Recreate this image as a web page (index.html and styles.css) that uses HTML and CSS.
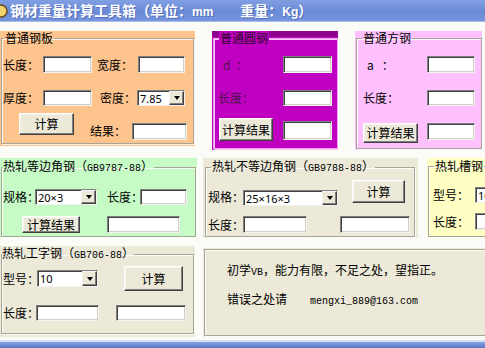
FILE: index.html
```html
<!DOCTYPE html>
<html lang="zh-CN">
<head>
    <meta charset="UTF-8">
    <title>钢材重量计算工具箱</title>
    <link rel="stylesheet" href="styles.css">
</head>
<body>
    <div class="titlebar">
        <svg class="app-icon" width="8" height="16" viewBox="0 0 8 16">
            <circle cx="1" cy="8" r="6" fill="#f2d36b" stroke="#6b4a1c" stroke-width="1.5"/>
        </svg>
        <span class="title">钢材重量计算工具箱（单位：<span class="unit">mm</span></span>
        <span class="title title-weight">重量：<span class="unit">Kg</span>）</span>
    </div>

    <div class="form">
        <!-- first band: plate, round bar, square bar -->
        <div class="band band-top">
            <div class="frame plate">
                <fieldset>
                    <legend>普通钢板</legend>
                    <div class="line mt11 h17">
                        <span class="lbl ml1 w40">长度：</span><input class="txt w49" type="text">
                        <span class="lbl ml5 w41">宽度：</span><input class="txt w47" type="text">
                    </div>
                    <div class="line mt17 h16">
                        <span class="lbl ml1 w40">厚度：</span><input class="txt w49 h16" type="text">
                        <span class="lbl ml8 w37">密度：</span>
                        <div class="combo w48"><span>7.85</span><i class="drop"></i></div>
                    </div>
                    <div class="line top mt7">
                        <button class="btn ml17 w55 h22">计算</button>
                        <span class="lbl ml16 w42 mt11">结果：</span>
                        <input class="txt w55 mt10" type="text">
                    </div>
                </fieldset>
            </div>

            <div class="frame round">
                <fieldset>
                    <legend>普通圆钢</legend>
                    <div class="line mt11 h17">
                        <span class="lbl dim ml9 w60">d  ：</span><input class="txt w49" type="text">
                    </div>
                    <div class="line mt17 h16">
                        <span class="lbl dim ml4 w65">长度：</span><input class="txt w49 h16" type="text">
                    </div>
                    <div class="line top mt12">
                        <button class="btn ml5 w54 h23">计算结果</button>
                        <input class="txt ml10 w49 h19 mt3" type="text">
                    </div>
                </fieldset>
            </div>

            <div class="frame square">
                <fieldset>
                    <legend>普通方钢</legend>
                    <div class="line mt11 h17">
                        <span class="lbl ml10 w60">a   ：</span><input class="txt w48" type="text">
                    </div>
                    <div class="line mt17 h16">
                        <span class="lbl ml6 w64">长度：</span><input class="txt w48 h16" type="text">
                    </div>
                    <div class="line top mt17">
                        <button class="btn ml6 w55 h20">计算结果</button>
                        <input class="txt ml9 w48" type="text">
                    </div>
                </fieldset>
            </div>
        </div>

        <!-- second band: angles and channel -->
        <div class="band band-mid">
            <div class="frame equal">
                <fieldset>
                    <legend>热轧等边角钢（<span class="mono">GB9787-88</span>）</legend>
                    <div class="line mt13 h16">
                        <span class="lbl ml1 w32">规格：</span>
                        <div class="combo w62"><span>20×3</span><i class="drop"></i></div>
                        <span class="lbl ml10 w33">长度：</span><input class="txt w47 h16" type="text">
                    </div>
                    <div class="line mt11 h17">
                        <button class="btn ml20 w58 h17">计算结果</button>
                        <input class="txt ml27 w73" type="text">
                    </div>
                </fieldset>
            </div>

            <div class="frame unequal">
                <fieldset>
                    <legend>热轧不等边角钢（<span class="mono">GB9788-88</span>）</legend>
                    <div class="line top mt4">
                        <span class="lbl ml2 w35 mt10">规格：</span>
                        <div class="combo w95 mt10"><span>25×16×3</span><i class="drop"></i></div>
                        <button class="btn ml14 w53 h23">计算</button>
                    </div>
                    <div class="line mt10 h17">
                        <span class="lbl ml2 w35">长度：</span><input class="txt w64" type="text">
                        <input class="txt ml33 w70" type="text">
                    </div>
                </fieldset>
            </div>

            <div class="frame channel">
                <fieldset>
                    <legend>热轧槽钢</legend>
                    <div class="line mt14 h16">
                        <span class="lbl ml4 w42">型号：</span>
                        <div class="combo w60"><span>10</span><i class="drop"></i></div>
                    </div>
                    <div class="line mt10 h17">
                        <span class="lbl ml4 w42">长度：</span><input class="txt w60" type="text">
                    </div>
                </fieldset>
            </div>
        </div>

        <!-- third band: I-beam and note -->
        <div class="band band-bot">
            <div class="frame ibeam">
                <fieldset>
                    <legend>热轧工字钢（<span class="mono">GB706-88</span>）</legend>
                    <div class="line mt3 h25">
                        <span class="lbl ml1 w34">型号：</span>
                        <div class="combo w61 h17"><span>10</span><i class="drop"></i></div>
                        <button class="btn ml26 w59 h25">计算</button>
                    </div>
                    <div class="line mt14 h16">
                        <span class="lbl ml1 w33">长度：</span><input class="txt w63 h16" type="text">
                        <input class="txt ml17 w70 h16" type="text">
                    </div>
                </fieldset>
            </div>

            <div class="frame note">
                <fieldset>
                    <p class="note-text">初学<span class="mono">VB</span>，能力有限，不足之处，望指正。</p>
                    <p class="note-mail">错误之处请<span class="mono mail">mengxi_889@163.com</span></p>
                </fieldset>
            </div>
        </div>
    </div>

    <div class="statusbar"></div>
</body>
</html>
```

FILE: styles.css
```css
* {
    box-sizing: border-box;
}

body {
    margin: 0;
    width: 485px;
    height: 348px;
    overflow: hidden;
    background: #fbfbf8;
    font-family: "Noto Sans CJK SC", "Noto Sans", sans-serif;
    font-size: 12px;
    line-height: 14px;
    color: #000;
}

/* title bar */
.titlebar {
    height: 22px;
    display: flex;
    align-items: center;
    background: linear-gradient(#819fe2, #6a8ad7 55%, #7796dd);
    border-bottom: 1px solid #a9bdec;
    color: #fff;
    font-size: 14px;
    font-weight: bold;
    white-space: nowrap;
    text-shadow: 1px 1px 0 rgba(40, 60, 140, 0.45);
}

.app-icon {
    flex: none;
    margin-right: 2px;
}

.unit {
    font-family: "Liberation Sans", sans-serif;
    font-size: 12px;
}

.title-weight {
    margin-left: 27px;
}

/* form */
.form {
    padding-top: 9px;
}

.band {
    display: flex;
    align-items: flex-start;
}

.band-top {
    height: 119px;
}

.band-mid {
    height: 80px;
    margin-top: 8px;
}

.band-bot {
    height: 91px;
    margin-top: 8px;
}

.frame {
    flex: none;
    display: flex;
    height: 100%;
}

.frame fieldset {
    flex: 1;
    margin: 0;
    padding: 0;
    min-width: 0;
    border: 1px solid #a6a597;
    box-shadow: inset 1px 1px 0 rgba(255, 255, 255, 0.8), 1px 1px 0 rgba(255, 255, 255, 0.8);
}

.frame legend {
    margin-left: 5px;
    padding: 0 1px;
    font-size: 12px;
    line-height: 14px;
    white-space: nowrap;
}

.plate {
    width: 195px;
    height: 115px;
    background: #fdc48e;
    padding: 0 1px 2px 1px;
}

.plate legend {
    margin-left: 2px;
}

.round {
    width: 126px;
    margin-left: 17px;
    background: linear-gradient(#8e008e 0 6px, #c000c0 6px);
    padding: 0 0 1px 1px;
}

.round fieldset {
    border-color: #f0a0f0;
}

.round legend {
    color: #2a0a2a;
    background: #c000c0;
}

.square {
    width: 127px;
    margin-left: 17px;
    background: #ffc0ff;
    padding: 0 0 1px 1px;
}

.equal {
    width: 197px;
    background: #c6fbc6;
    padding: 1px;
}

.equal legend {
    margin-left: 0;
}

.unequal {
    width: 215px;
    margin-left: 6px;
    background: #ece9d8;
    padding: 1px 3px 1px 2px;
}

.channel {
    width: 100px;
    margin-left: 9px;
    background: #ffffc4;
    padding: 1px 0 1px 1px;
}

.ibeam {
    width: 195px;
    background: #ece9d8;
    padding: 0 1px 3px 1px;
}

.ibeam legend {
    margin-left: 0;
    padding: 0;
}

.note {
    width: 290px;
    height: 89px;
    margin-left: 8px;
    margin-top: 2px;
    background: #ece9d8;
    padding: 1px 0 1px 1px;
}

.note-text {
    margin: 13px 0 0 22px;
}

.note-mail {
    margin: 12px 0 0 22px;
}

.mail {
    margin-left: 23px;
}

.mono {
    font-family: "Liberation Mono", monospace;
    font-size: 10px;
}

/* rows of controls */
.line {
    display: flex;
    align-items: center;
}

.line.top {
    align-items: flex-start;
}

.lbl {
    flex: none;
    white-space: pre;
}

.dim {
    color: #4a144a;
}

.txt {
    flex: none;
    height: 17px;
    margin: 0;
    padding: 0 2px;
    background: #fff;
    border: 1px solid;
    border-color: #808080 #f2f2ee #f2f2ee #808080;
    box-shadow: inset 1px 1px 0 #404040, inset -1px -1px 0 #d4d0c8;
    font: 11px "Noto Sans", sans-serif;
}

.combo {
    flex: none;
    display: flex;
    height: 16px;
    background: #fff;
    border: 1px solid;
    border-color: #808080 #f2f2ee #f2f2ee #808080;
    box-shadow: inset 1px 1px 0 #404040;
    font: 11px/13px "Noto Sans", sans-serif;
}

.combo span {
    flex: 1;
    padding: 1px 0 0 2px;
    white-space: nowrap;
    overflow: hidden;
}

.drop {
    width: 15px;
    background: #ece9d8;
    border: 1px solid;
    border-color: #f4f4f0 #404040 #404040 #f4f4f0;
    box-shadow: inset -1px -1px 0 #808080;
    display: flex;
    align-items: center;
    justify-content: center;
}

.drop::after {
    content: "";
    border-left: 3.5px solid transparent;
    border-right: 3.5px solid transparent;
    border-top: 4px solid #000;
}

.btn {
    flex: none;
    margin-top: 0;
    padding: 0;
    background: #ece9d8;
    border: 1px solid;
    border-color: #fff #404040 #404040 #fff;
    box-shadow: inset -1px -1px 0 #808080, inset 1px 1px 0 #f6f4ea;
    font: 12px/14px "Noto Sans CJK SC", sans-serif;
    color: #000;
}

/* sizes */
.w32 { width: 32px; }
.w33 { width: 33px; }
.w34 { width: 34px; }
.w35 { width: 35px; }
.w37 { width: 37px; }
.w40 { width: 40px; }
.w41 { width: 41px; }
.w42 { width: 42px; }
.w47 { width: 47px; }
.w48 { width: 48px; }
.w49 { width: 49px; }
.w53 { width: 53px; }
.w54 { width: 54px; }
.w55 { width: 55px; }
.w58 { width: 58px; }
.w59 { width: 59px; }
.w60 { width: 60px; }
.w61 { width: 61px; }
.w62 { width: 62px; }
.w63 { width: 63px; }
.w64 { width: 64px; }
.w65 { width: 65px; }
.w70 { width: 70px; }
.w73 { width: 73px; }
.w95 { width: 95px; }

.h16 { height: 16px; }
.h17 { height: 17px; }
.h19 { height: 19px; }
.h20 { height: 20px; }
.h22 { height: 22px; }
.h23 { height: 23px; }
.h25 { height: 25px; }

.ml1 { margin-left: 1px; }
.ml2 { margin-left: 2px; }
.ml4 { margin-left: 4px; }
.ml5 { margin-left: 5px; }
.ml6 { margin-left: 6px; }
.ml8 { margin-left: 8px; }
.ml9 { margin-left: 9px; }
.ml10 { margin-left: 10px; }
.ml14 { margin-left: 14px; }
.ml16 { margin-left: 16px; }
.ml17 { margin-left: 17px; }
.ml20 { margin-left: 20px; }
.ml26 { margin-left: 26px; }
.ml27 { margin-left: 27px; }
.ml33 { margin-left: 33px; }

.mt3 { margin-top: 3px; }
.mt4 { margin-top: 4px; }
.mt7 { margin-top: 7px; }
.mt10 { margin-top: 10px; }
.mt11 { margin-top: 11px; }
.mt12 { margin-top: 12px; }
.mt13 { margin-top: 13px; }
.mt14 { margin-top: 14px; }
.mt17 { margin-top: 17px; }

/* bottom window edge */
.statusbar {
    height: 8px;
    margin-top: 3px;
    border-top: 2px solid #d6dff3;
    background: linear-gradient(#88a3e0, #5474c6);
}
```
